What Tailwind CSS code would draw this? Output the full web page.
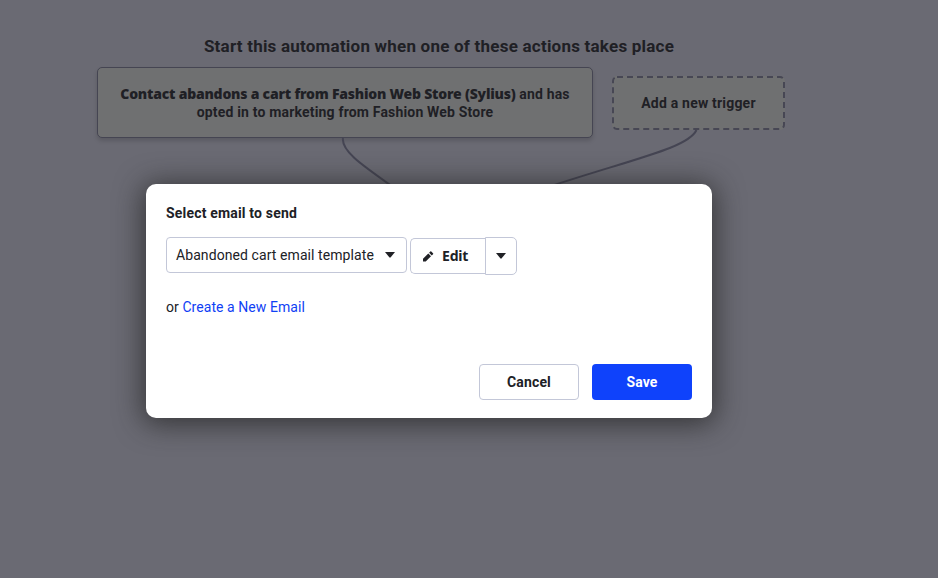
<!DOCTYPE html>
<html lang="en">
<head>
<meta charset="utf-8">
<title>Automation</title>
<script src="https://cdn.jsdelivr.net/npm/@tailwindcss/browser@4"></script>
</head>
<body class="relative h-[578px] w-[938px] overflow-hidden bg-[#6a6a73] font-['Roboto',sans-serif] text-sm text-[#1f2025]">
<main class="w-[878px] pt-9">
  <h1 class="text-center text-[17px] leading-[21px] font-bold tracking-[0.22px] whitespace-nowrap">Start this automation when one of these actions takes place</h1>
  <div class="mt-2.5 flex items-start pl-[97px]">
    <div class="flex h-[71px] w-[496px] flex-col items-center justify-center rounded-[5px] border border-[#454552] bg-[#6f7071] leading-[18px] font-bold tracking-[0.18px] whitespace-nowrap shadow-[0_3px_4px_rgba(0,0,0,0.15)]">
      <p class="h-[18px]"><strong class="font-['Noto_Sans',sans-serif] tracking-[-0.22px]">Contact abandons a cart from Fashion Web Store (Sylius)</strong> and has</p>
      <p class="h-[18px]">opted in to marketing from Fashion Web Store</p>
    </div>
    <button class="relative mt-[9px] ml-[19px] flex h-[54px] w-[173px] items-center justify-center rounded-[5px] bg-[#6f7071] font-bold tracking-[0.2px]">
      <svg class="absolute inset-0" width="173" height="54" fill="none" stroke="#474754" stroke-width="2"><rect x="1" y="1" width="171" height="52" rx="4" stroke-dasharray="6 4"/></svg>
      Add a new trigger</button>
  </div>
</main>
<svg class="absolute top-0 left-0" width="938" height="200" fill="none" stroke="#454553" stroke-width="2"><path d="M343 138C341 151 362 165 393 187M696.5 130C688 148 636 158 545 188"/></svg>
<section role="dialog" class="absolute top-[184px] left-[146px] flex h-[234px] w-[566px] flex-col rounded-[10px] bg-white px-5 pt-5 pb-[18px] text-[#202126] shadow-[0_3px_28px_3px_rgba(35,35,35,0.75)]">
  <h2 class="leading-[18px] font-bold tracking-[0.18px]">Select email to send</h2>
  <div class="mt-[15px] flex h-[38px] items-start">
    <button class="flex h-9 w-[241px] items-center justify-between rounded-[4px] border border-[#c3c7d8] pr-[11px] pl-[9px]"><span class="tracking-[0.08px] whitespace-nowrap">Abandoned cart email template</span><svg width="10" height="6"><path d="M0 0h10L5.7 5.3Q5 6 4.3 5.3Z" fill="#202126"/></svg></button>
    <button class="mt-px ml-[3px] flex h-9 w-[75px] items-center rounded-l-[5px] border border-r-0 border-[#c3c7d8] pl-3 font-['Noto_Sans',sans-serif] font-bold tracking-[-0.2px]"><svg class="mr-2" width="11" height="11" viewBox="0 0 11 11" fill="#202126"><path d="M0 10.5V7.8L5.3 2.5 8 5.2 2.7 10.5ZM6.1 1.7 7.3.5Q7.8 0 8.3.5L10 2.2Q10.5 2.7 10 3.2L8.8 4.4Z"/></svg>Edit</button>
    <button class="flex h-[38px] w-8 items-center justify-center rounded-r-[5px] border border-[#c3c7d8]"><svg width="10" height="6"><path d="M0 0h10L5.7 5.3Q5 6 4.3 5.3Z" fill="#202126"/></svg></button>
  </div>
  <p class="mt-[23px] leading-[18px] tracking-[0.06px] whitespace-nowrap">or <a class="text-[#0f41f5]">Create a New Email</a></p>
  <div class="mt-auto flex justify-end gap-[13px] font-bold tracking-[0.15px]">
    <button class="h-9 w-[100px] rounded-[4px] border border-[#c3c7d8]">Cancel</button>
    <button class="h-9 w-[100px] rounded-[4px] bg-[#0f42fb] text-white">Save</button>
  </div>
</section>
</body>
</html>
